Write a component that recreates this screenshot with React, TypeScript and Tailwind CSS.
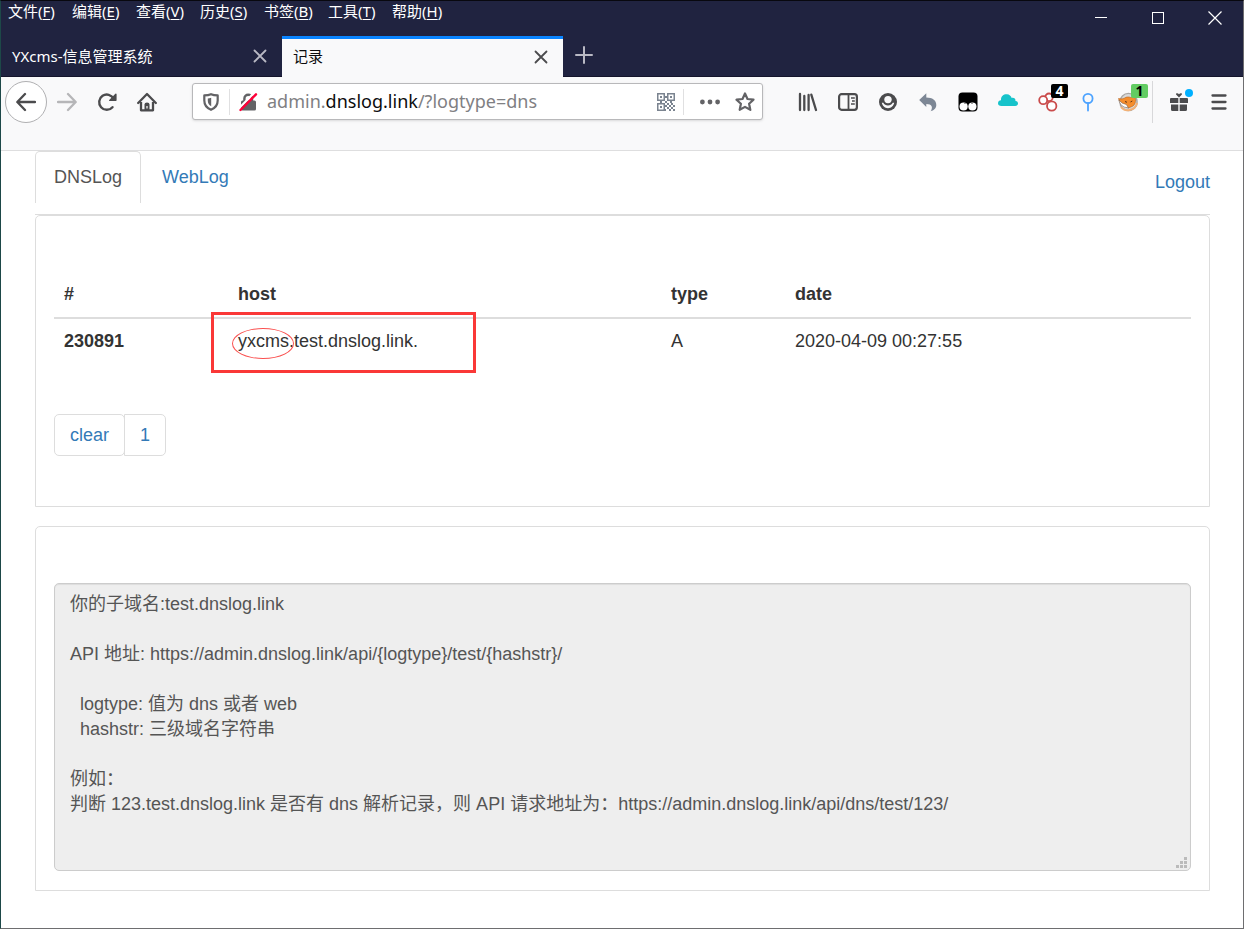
import type { ReactNode } from "react";

const menus: [string, string][] = [
  ["文件", "F"],
  ["编辑", "E"],
  ["查看", "V"],
  ["历史", "S"],
  ["书签", "B"],
  ["工具", "T"],
  ["帮助", "H"],
];

const info = `你的子域名:test.dnslog.link

API 地址: https://admin.dnslog.link/api/{logtype}/test/{hashstr}/

  logtype: 值为 dns 或者 web
  hashstr: 三级域名字符串

例如：
判断 123.test.dnslog.link 是否有 dns 解析记录，则 API 请求地址为：https://admin.dnslog.link/api/dns/test/123/`;

function Icon({ children, className = "" }: { children: ReactNode; className?: string }) {
  return (
    <svg viewBox="0 0 20 20" className={`size-5 shrink-0 ${className}`} fill="none" aria-hidden="true">
      {children}
    </svg>
  );
}

function ToolButton({ label, children }: { label: string; children: ReactNode }) {
  return (
    <button aria-label={label} className="relative flex h-10 w-10 shrink-0 items-center justify-center text-[#4b4b4d]">
      {children}
    </button>
  );
}

function TitleBar() {
  return (
    <header className="flex h-[35px] items-start justify-between">
      <nav className="flex pl-[7px] text-[15px] leading-5 text-white">
        {menus.map(([name, key]) => (
          <button key={key} className="w-16 text-left whitespace-nowrap">
            {name}(<span className="underline underline-offset-2">{key}</span>)
          </button>
        ))}
      </nav>
      <div className="flex text-white">
        <button aria-label="最小化" className="flex h-[34px] w-[57px] items-center justify-center">
          <svg viewBox="0 0 12 12" className="size-3"><path d="M0 5.5h12" stroke="currentColor" /></svg>
        </button>
        <button aria-label="最大化" className="flex h-[34px] w-[57px] items-center justify-center">
          <svg viewBox="0 0 12 12" className="size-3"><rect x=".5" y=".5" width="11" height="11" fill="none" stroke="currentColor" /></svg>
        </button>
        <button aria-label="关闭窗口" className="flex h-[34px] w-[57px] items-center justify-center">
          <svg viewBox="0 0 14 14" className="size-3.5"><path d="M.5.5l13 13M13.500.5l-13 13" stroke="currentColor" strokeWidth="1.200" /></svg>
        </button>
      </div>
    </header>
  );
}

function CloseTab() {
  return (
    <button aria-label="关闭标签页" className="flex size-6 items-center justify-center">
      <svg viewBox="0 0 14 14" className="size-3.5" fill="none" stroke="currentColor" strokeWidth="1.8" strokeLinecap="round">
        <path d="M1.500 1.500l11 11M12.500 1.500l-11 11" />
      </svg>
    </button>
  );
}

function BrowserTabs() {
  return (
    <div className="flex h-[41px] text-[15px]">
      <div className="flex w-[281px] items-center justify-between border-b border-[#14142b] pr-[10px] pl-[11px] text-white">
        <span>YXcms-信息管理系统</span>
        <span className="text-[#b9b9c4]"><CloseTab /></span>
      </div>
      <div className="flex w-[281px] items-center justify-between border-t-[3px] border-[#0a84ff] bg-[#f9f9fa] pr-[10px] pb-[3px] pl-[11px] text-[#0c0c0d]">
        <span>记录</span>
        <span className="text-[#4b4b4d]"><CloseTab /></span>
      </div>
      <div className="flex flex-1 border-b border-[#14142b] pl-3">
        <button aria-label="新建标签页" className="flex h-[38px] items-center text-[#b9b9c4]">
          <svg viewBox="0 0 18 18" className="size-[18px]" stroke="currentColor" strokeWidth="2" strokeLinecap="round">
            <path d="M9 1v16M1 9h16" />
          </svg>
        </button>
      </div>
    </div>
  );
}

function QrIcon() {
  return (
    <svg viewBox="0 0 18 18" className="size-[18px] shrink-0" fill="#7b8490" aria-hidden="true">
      <path fillRule="evenodd" d="M0 0h8v8H0zM1.500 1.500v5h5v-5zM10 0h8v8h-8zM11.500 1.500v5h5v-5zM0 10h8v8H0zM1.500 11.500v5h5v-5z" />
      <path d="M3 3h2v2H3zM13 3h2v2h-2zM3 13h2v2H3zM8 3h2v2H8zM3 8h2v2H3zM8 8h2v2H8zM13 8h2v2h-2zM10 10h2v2h-2zM14 10h2v2h-2zM12 12h2v2h-2zM16 12h2v2h-2zM10 14h2v2h-2zM14 14h2v2h-2zM12 16h2v2h-2zM16 16h2v2h-2zM8 12h2v2H8zM8 16h1v2H8z" />
    </svg>
  );
}

function AddressBar() {
  return (
    <div className="ml-[25px] flex h-[37px] min-w-0 flex-1 items-center rounded-[3px] border border-[#b8b8ba] bg-white text-[#636366] shadow-sm">
      <span className="flex w-[36px] shrink-0 justify-center">
        <svg viewBox="0 0 16 18" className="h-[18px] w-4" fill="none" aria-hidden="true">
          <path d="M8 1.200c2 .9 4.300 1.200 6.700 1.200v5.100c0 4.300-2.600 7.600-6.700 9.300-4.100-1.700-6.700-5-6.700-9.300V2.400C3.700 2.400 6 2.100 8 1.200z" stroke="currentColor" strokeWidth="2.200" strokeLinejoin="round" />
          <path d="M8.200 4.800c-1.200.4-2.200.6-3.400.7v2.200c0 2.400 1.200 4.300 3.400 5.500z" fill="currentColor" />
        </svg>
      </span>
      <span className="h-[26px] w-px bg-[#e0e0e1]" />
      <span className="flex w-[37px] shrink-0 justify-center">
        <svg viewBox="0 0 20 20" className="size-5" fill="none" aria-hidden="true">
          <path d="M5.400 9V6.500a3.800 3.800 0 0 1 7.600 0V9" stroke="currentColor" strokeWidth="2.400" />
          <rect x="2" y="8.500" width="15" height="10" rx="1.500" fill="currentColor" />
          <path d="M.5 15.800L15.500.5" stroke="white" strokeWidth="2.200" />
          <path d="M1.500 18L17 2.300" stroke="#ff0039" strokeWidth="2.400" strokeLinecap="round" />
        </svg>
      </span>
      <div className="min-w-0 flex-1 truncate text-[18px] text-[#808083]">
        admin.<span className="text-[#0c0c0d]">dnslog.link</span>/?logtype=dns
      </div>
      <QrIcon />
      <span className="ml-2 h-[26px] w-px bg-[#e0e0e1]" />
      <button aria-label="页面操作" className="ml-4 flex">
        <Icon><circle cx="2.400" cy="10" r="2.400" fill="currentColor" /><circle cx="10" cy="10" r="2.400" fill="currentColor" /><circle cx="17.600" cy="10" r="2.400" fill="currentColor" /></Icon>
      </button>
      <button aria-label="收藏" className="mr-[7px] ml-[15px] flex">
        <Icon>
          <path d="M10 1.500l2.500 5.500 6 .7-4.400 4.100 1.200 6L10 14.900l-5.300 2.900 1.200-6L1.500 7.700l6-.7z" stroke="currentColor" strokeWidth="2.200" strokeLinejoin="round" />
        </Icon>
      </button>
    </div>
  );
}

function Toolbar() {
  return (
    <div className="h-[74px] border-b border-[#dededf] bg-[#f9f9fa]">
      <div className="flex h-[49px] items-center pr-1 pl-1">
        <button aria-label="后退" className="flex size-[42px] shrink-0 items-center justify-center rounded-full border border-[#b0b0b2] bg-white text-[#4b4b4d]">
          <Icon><path d="M19 10H1.500M9 2L1.300 10 9 18" stroke="currentColor" strokeWidth="2.300" strokeLinecap="round" strokeLinejoin="round" /></Icon>
        </button>
        <button aria-label="前进" disabled className="flex h-10 w-10 shrink-0 items-center justify-center text-[#b6b6b8]">
          <Icon><path d="M1 10h17.500M11 2l7.700 8L11 18" stroke="currentColor" strokeWidth="2.300" strokeLinecap="round" strokeLinejoin="round" /></Icon>
        </button>
        <ToolButton label="刷新">
          <Icon>
            <path d="M15.500 15.200A7.600 7.600 0 1 1 16.600 6.800" stroke="currentColor" strokeWidth="2.400" strokeLinecap="round" />
            <path d="M18.800 1.500q.8 0 .8.800v5.900q0 .8-.8.800h-6.300q-.9-.3-.3-1.100l5.900-6q.3-.4.700-.4z" fill="currentColor" />
          </Icon>
        </ToolButton>
        <ToolButton label="主页">
          <Icon>
            <path d="M1.200 11L10 2l8.800 9" stroke="currentColor" strokeWidth="2.300" strokeLinecap="round" strokeLinejoin="round" />
            <path d="M4 10v8.300h12V10" stroke="currentColor" strokeWidth="2.300" strokeLinejoin="round" />
            <path d="M7.500 18v-5.500q0-2 2.500-2t2.500 2V18z" fill="currentColor" /><path d="M10 14v2.500" stroke="white" strokeWidth="1.200" />
          </Icon>
        </ToolButton>
        <AddressBar />
        <div className="ml-[25px] flex shrink-0 items-center">
          <ToolButton label="我的足迹">
            <Icon><path d="M2 2v16M6.300 4v14M10.600 3v15M13.300 2.700L18 18" stroke="currentColor" strokeWidth="2.300" strokeLinecap="round" /></Icon>
          </ToolButton>
          <ToolButton label="侧栏">
            <Icon>
              <rect x="1.100" y="2.200" width="17.800" height="15.600" rx="2.500" stroke="currentColor" strokeWidth="2.200" />
              <path d="M10.500 2v16" stroke="currentColor" strokeWidth="1.800" />
              <path d="M13 6h3.800M14 9h2.800M13 12h3.800" stroke="currentColor" strokeWidth="1.300" />
            </Icon>
          </ToolButton>
          <ToolButton label="账户">
            <Icon>
              <circle cx="10" cy="10" r="9" fill="currentColor" />
              <circle cx="10" cy="7.600" r="3.700" fill="#f9f9fa" />
              <path d="M3.800 10.800h1.500c.9 1.700 2.600 2.600 4.700 2.600s3.800-.9 4.700-2.600h1.500c-.5 3-2.900 5.400-6.200 5.400s-5.700-2.400-6.200-5.400z" fill="#f9f9fa" />
            </Icon>
          </ToolButton>
          <ToolButton label="撤销关闭标签页">
            <Icon><path d="M1.200 8L8.300 1.300v4.200c6 0 10 2.700 10 7.500 0 3.400-2.400 5.500-5.700 6.200 2.600-3.800 1.500-7.300-4.300-7.300v3z" fill="#7d8795" /></Icon>
          </ToolButton>
          <ToolButton label="脚本管理">
            <Icon>
              <rect x=".5" y=".5" width="19" height="19" rx="4" fill="black" />
              <circle cx="5.600" cy="14.500" r="4.100" fill="white" /><circle cx="14.400" cy="14.500" r="4.100" fill="white" />
              <circle cx="7" cy="11.500" r=".5" fill="black" /><circle cx="14" cy="11.500" r=".5" fill="black" />
            </Icon>
          </ToolButton>
          <ToolButton label="云扩展">
            <Icon><path d="M3.500 14C1.300 14 0 13 0 11.200 0 9.300 1.400 8.300 3 8.200 2.800 4 6 2 9 2.300c2.300.2 4 1.600 4.700 3.700 2.200-.6 4 .8 3.800 3 1.800.2 2.500 1.300 2.500 2.500 0 1.500-1 2.500-2.800 2.500z" fill="#17c3ca" /></Icon>
          </ToolButton>
          <ToolButton label="网络扩展">
            <Icon>
              <g stroke="#ca4b4b" strokeWidth="1.800" fill="white">
                <circle cx="11" cy="5.300" r="3.800" /><circle cx="5.200" cy="8.200" r="4" /><circle cx="13.700" cy="14" r="4.700" />
              </g>
            </Icon>
            <span className="absolute top-[2px] left-[23px] flex h-[14px] w-[17px] items-center justify-center rounded-[2px] bg-black text-[14px] leading-[14px] font-bold text-white">4</span>
          </ToolButton>
          <ToolButton label="定位扩展">
            <Icon><circle cx="10" cy="6.500" r="4.600" stroke="#4da3ff" strokeWidth="1.800" /><path d="M10 11v7.500" stroke="#4da3ff" strokeWidth="1.800" strokeLinecap="round" /></Icon>
          </ToolButton>
          <ToolButton label="代理扩展">
            <Icon>
              <circle cx="10.500" cy="10" r="8.600" fill="#d9d9d8" stroke="#a9a6a3" strokeWidth="1.400" />
              <path d="M3 15c3.500 5 14 4.500 16.200-4" stroke="#f3b277" strokeWidth="2" />
              <path d="M.5 6.500c3 .8 5 .3 7.500-1.200 1.500-.6 4-.3 5 .4L16.500 3l1 4.500c.2 2.500-.5 5-2.500 6.500l-4.500 2-4.500-2C3 12.500 1.500 9.500.5 6.500z" fill="#f58d2c" stroke="#b8651f" strokeWidth=".6" />
              <path d="M.8 8l3.500 3.200 4 1.300 2.200 3.500-4.300-1C3.500 14 1.500 11 .8 8z" fill="#fff" stroke="#6b5340" strokeWidth=".5" />
              <path d="M7 9.500l2 .8M12.500 10l1.800-1" stroke="#5c3515" />
            </Icon>
            <span className="absolute top-[2px] left-[23px] flex h-[14px] w-[17px] items-center justify-center rounded-[2px] bg-[#62cc62] text-[14px] leading-[14px] font-bold text-black">1</span>
          </ToolButton>
          <span className="mr-[6px] ml-1 h-[42px] w-px bg-[#d8d8da]" />
          <ToolButton label="新功能">
            <Icon>
              <path d="M2 6h7.300v5H1V7q0-1 1-1zM10.700 6H18q1 0 1 1v4h-8.300zM2 12.500h7.300V19H3.500Q2 19 2 17.500zM10.700 12.500H18v5q0 1.500-1.500 1.500h-5.800z" fill="currentColor" />
              <path d="M10 5.500L7.300 2.800C6 1 9 .7 10 2.200c1-1.500 4-1.200 2.700.6z" fill="currentColor" />
            </Icon>
            <span className="absolute top-[7px] left-[26px] size-2 rounded-full bg-[#00b0ff]" />
          </ToolButton>
          <ToolButton label="打开菜单">
            <Icon><path d="M3.500 3.500h13M3.500 10h13M3.500 16.500h13" stroke="currentColor" strokeWidth="2.300" strokeLinecap="round" /></Icon>
          </ToolButton>
        </div>
      </div>
    </div>
  );
}

function LogTable() {
  return (
    <table className="w-full table-fixed text-left text-[#333]">
      <colgroup>
        <col className="w-[174px]" />
        <col className="w-[433px]" />
        <col className="w-[124px]" />
        <col />
      </colgroup>
      <thead>
        <tr className="border-b-2 border-[#ddd]">
          <th className="p-[10px]">#</th>
          <th className="p-[10px]">host</th>
          <th className="p-[10px]">type</th>
          <th className="p-[10px]">date</th>
        </tr>
      </thead>
      <tbody>
        <tr>
          <th scope="row" className="p-[10px]">230891</th>
          <td className="relative p-[10px]">
            yxcms.test.dnslog.link.
            <span className="absolute -top-[7px] -left-[17px] h-[61px] w-[265px] border-3 border-[#fa3837]" />
            <span className="absolute top-[9px] left-1 h-[31px] w-[62px] rounded-[50%] border border-[#fa5150]" />
          </td>
          <td className="p-[10px]">A</td>
          <td className="p-[10px]">2020-04-09 00:27:55</td>
        </tr>
      </tbody>
    </table>
  );
}

export default function App() {
  return (
    <div className="flex min-h-screen flex-col border border-t-[#08080f] border-r-[#6e6e70] border-b-[#6e6e70] border-l-[#1d4848] bg-white font-['Noto_Sans','Noto_Sans_CJK_SC',sans-serif]">
      <div className="bg-[#202340]">
        <TitleBar />
        <BrowserTabs />
      </div>
      <Toolbar />
      <main className="pr-[33px] pl-[34px] font-['Liberation_Sans','Noto_Sans_CJK_SC',sans-serif] text-[18px] leading-[25px]">
        <nav className="flex justify-between border-b border-[#ddd] pb-[11px] text-[#337ab7]">
          <div className="flex gap-[3px]">
            <a href="#dns" className="h-[52px] rounded-t-[5px] border border-b-0 border-[#ddd] px-[18px] pt-[13px] text-[#555]">DNSLog</a>
            <a href="#web" className="h-[52px] px-[18px] pt-[14px]">WebLog</a>
          </div>
          <a href="#logout" className="pt-[19px]">Logout</a>
        </nav>
        <section className="rounded-t-[5px] border border-[#ddd] px-[18px] pt-14 pb-[50px]">
          <LogTable />
          <div className="mt-[50px] flex leading-6">
            <a href="#clear" className="rounded-[5px] border border-[#ddd] px-[15px] py-[8px] text-[#337ab7]">clear</a>
            <a href="#page-1" className="-ml-px rounded-r-[5px] border border-[#ddd] px-[15px] py-[8px] text-[#337ab7]">1</a>
          </div>
        </section>
        <section className="mt-[19px] rounded-t-[5px] border border-[#ddd] px-[18px] pt-14 pb-[19px]">
          <div className="relative">
            <textarea
              aria-label="接口说明"
              readOnly
              value={info}
              className="block h-[288px] w-full resize-none rounded-[5px] border border-[#ccc] bg-[#eee] px-[15px] py-[8px] text-[#555] shadow-[inset_0_1px_1px_rgba(0,0,0,0.075)] outline-none"
            />
            <svg viewBox="0 0 11 11" className="absolute right-1 bottom-[3px] size-[11px]" fill="#bbb" aria-hidden="true">
              <path d="M8 0h3v3H8zM4 4h3v3H4zM8 4h3v3H8zM0 8h3v3H0zM4 8h3v3H4zM8 8h3v3H8z" />
            </svg>
          </div>
        </section>
      </main>
    </div>
  );
}
